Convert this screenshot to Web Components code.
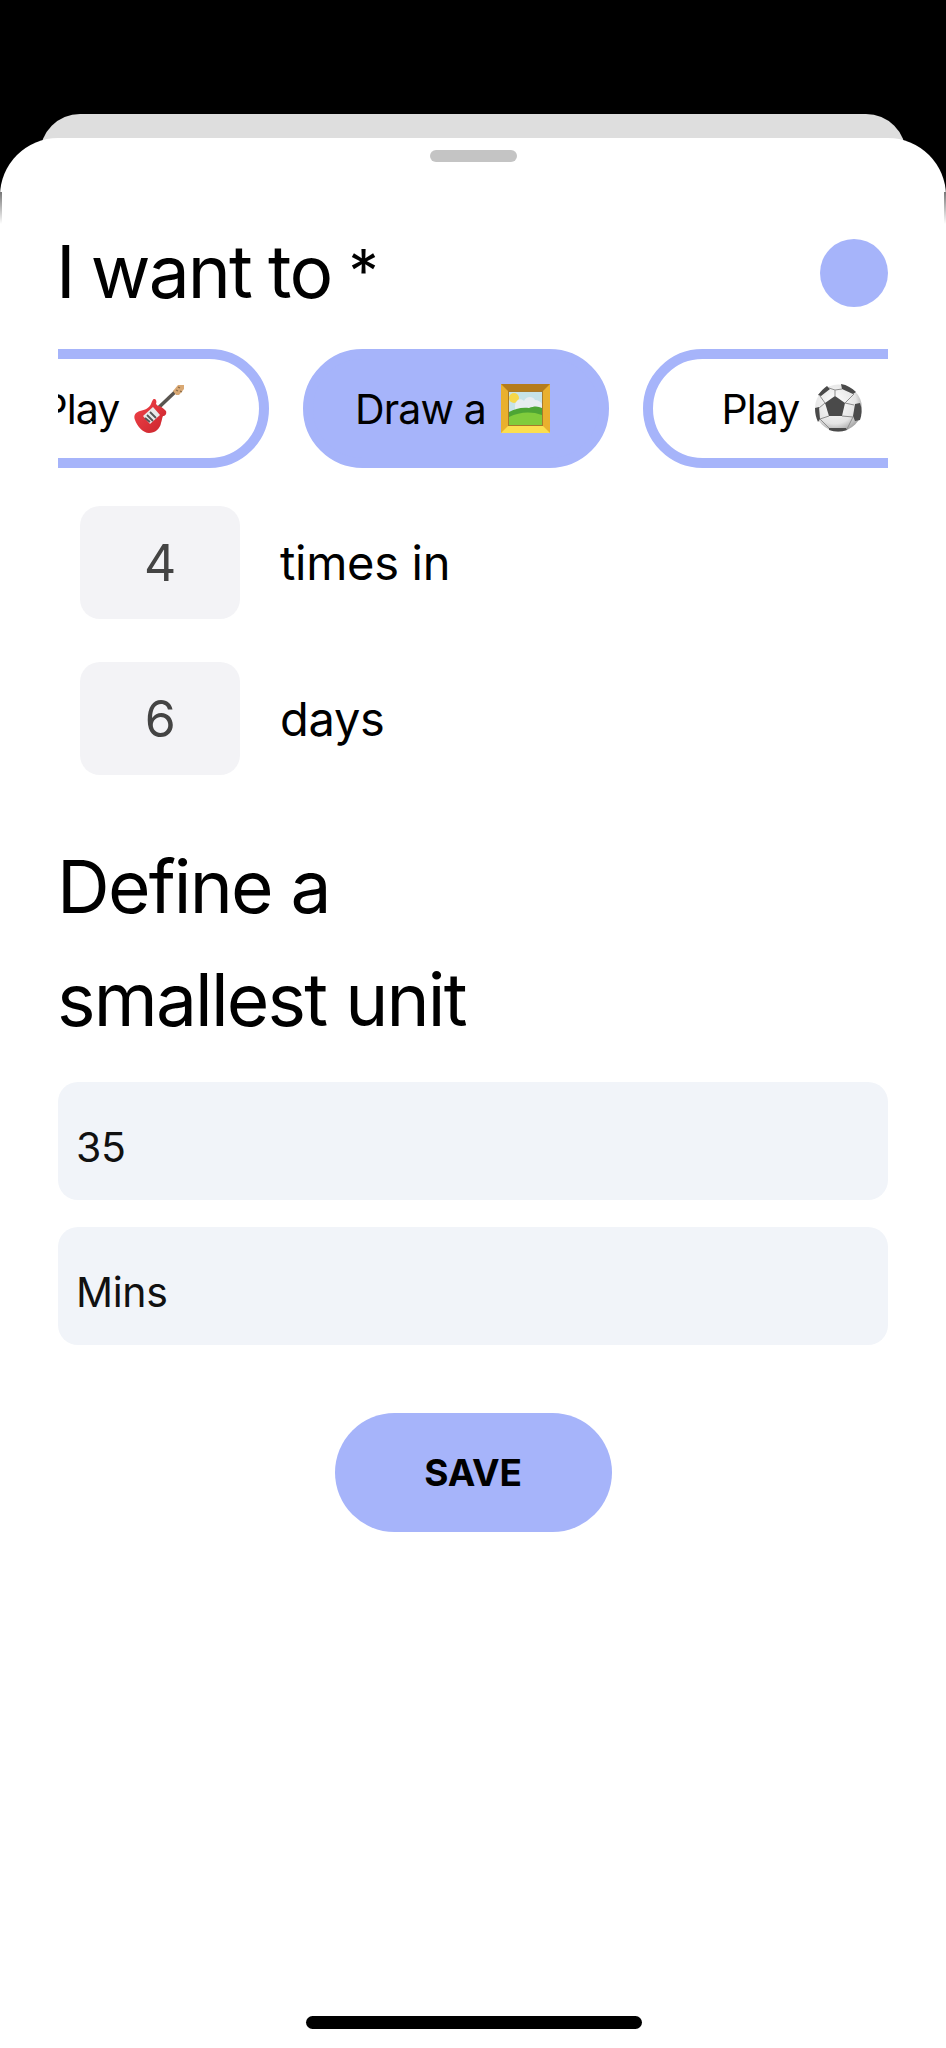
<!DOCTYPE html>
<html lang="en">
<head>
<meta charset="utf-8">
<title>I want to</title>
<style>
  html, body { margin: 0; background: #000; }
</style>
</head>
<body>
<sheet-stage>
  <section-title>I want to <span class="star">*</span><span slot="aside" class="dot"></span></section-title>
  <pill-strip>
    <habit-pill>Play <habit-emoji name="guitar"></habit-emoji></habit-pill>
    <habit-pill selected>Draw a <habit-emoji name="picture"></habit-emoji></habit-pill>
    <habit-pill>Play <habit-emoji name="ball"></habit-emoji></habit-pill>
  </pill-strip>
  <count-row value="4">times in</count-row>
  <count-row value="6">days</count-row>
  <unit-heading>Define a<br>smallest unit</unit-heading>
  <text-field value="35"></text-field>
  <text-field value="Mins"></text-field>
  <save-button>SAVE</save-button>
</sheet-stage>

<script>
const FONT = `Inter, Roboto, 'Liberation Sans', sans-serif`;

class SheetStage extends HTMLElement {
  constructor() {
    super();
    this.attachShadow({ mode: 'open' }).innerHTML = `
      <style>
        :host { display: block; width: 946px; height: 2048px; overflow: hidden; background: #000; padding-top: 114px; box-sizing: border-box; font-family: ${FONT}; }
        .back { margin: 0 40px; padding-top: 24px; background: #dedede; border-radius: 40px 40px 0 0; }
        .front { position: relative; margin: 0 -40px; height: 1910px; box-sizing: border-box; padding: 12px 58px 0; background: #fff; border-radius: 58px 58px 0 0; }
        /* the thin dark fade where the sheet's rounded corner meets the screen edge */
        .front::before, .front::after { content: ''; position: absolute; top: 54px; width: 2px; height: 32px; background: linear-gradient(#777, #fff); }
        .front::before { left: 0; }
        .front::after { right: 0; }
        .handle { width: 87px; height: 12px; margin: 0 auto 77px; background: #c4c4c4; border-radius: 6px; }
        .home { position: absolute; left: 306px; bottom: 19px; width: 336px; height: 13px; background: #000; border-radius: 7px; }
      </style>
      <div class="back">
        <div class="front">
          <div class="handle"></div>
          <slot></slot>
          <div class="home"></div>
        </div>
      </div>`;
  }
}

class SectionTitle extends HTMLElement {
  constructor() {
    super();
    this.attachShadow({ mode: 'open' }).innerHTML = `
      <style>
        :host { display: flex; align-items: center; justify-content: space-between; height: 68px; font-size: 73px; line-height: 68px; letter-spacing: -1.9px; word-spacing: -1.5px; color: #000; }
        .text { margin: 0 0 3px -2px; white-space: nowrap; }
        ::slotted(.star) { font-size: 60px; letter-spacing: 0; vertical-align: 5px; }
        ::slotted(.dot) { display: block; width: 68px; height: 68px; border-radius: 50%; background: #a6b4fa; }
      </style>
      <span class="text"><slot></slot></span>
      <slot name="aside"></slot>`;
  }
}

class PillStrip extends HTMLElement {
  constructor() {
    super();
    this.attachShadow({ mode: 'open' }).innerHTML = `
      <style>
        :host { display: block; overflow: hidden; margin-top: 42px; }
        .track { display: flex; gap: 34px; margin-left: -95px; }
      </style>
      <div class="track"><slot></slot></div>`;
  }
}

class HabitPill extends HTMLElement {
  constructor() {
    super();
    this.attachShadow({ mode: 'open' }).innerHTML = `
      <style>
        :host { flex: none; display: flex; align-items: center; justify-content: center; gap: 15px; width: 306px; height: 119px; box-sizing: border-box; padding-right: 7px; border: 10px solid #a6b4fa; border-radius: 60px; font-size: 41px; letter-spacing: -0.9px; color: #000; white-space: nowrap; }
        :host([selected]) { background: #a6b4fa; }
      </style>
      <slot></slot>`;
  }
}

const EMOJI = {
  guitar: `
    <defs><linearGradient id="g" x1="0" y1="0" x2="1" y2="1"><stop offset="0" stop-color="#f2444a"/><stop offset="1" stop-color="#c9242c"/></linearGradient></defs>
    <path d="M21 27L41 8" stroke="#5a5550" stroke-width="3.5"/>
    <path d="M39 7l5-6h6v4l-5 6h-3z" fill="#d9a873"/>
    <path d="M44 3l2 1M46 7l2 1M42 6l2 1" stroke="#8a6a48" stroke-width="1.2"/>
    <path d="M20 15c2 0 3 2 2 5l2 2c3 0 5 2 8 5 1 3-1 5-3 5-1 2-1 4-2 7-1 6-6 10-12 10S3 42 1 36c-2-5 1-8 5-9 5-1 9-3 11-7 1-3 2-5 3-5z" fill="url(#g)"/>
    <path d="M9 32l10-9 7 8-10 9z" fill="#e9e9e9"/>
    <path d="M13 31l6 6M16 28l6 6M11 34l5 4" stroke="#555" stroke-width="1.8"/>`,
  picture: `
    <rect width="49" height="49" fill="#e9b02e"/>
    <path d="M0 0h49l-7 7H7z" fill="#b57c1c"/>
    <path d="M0 49h49l-7-7H7z" fill="#fbdf50"/>
    <rect x="7" y="7" width="35" height="35" fill="#a87a2a"/>
    <rect x="8" y="8" width="33" height="33" fill="#c6e3e8"/>
    <circle cx="13" cy="14" r="5" fill="#f6d84a"/>
    <path d="M14 21c1-6 6-7 9-4 2-5 9-5 11-1 3 0 6 2 7 4v6H14z" fill="#e8edf0"/>
    <path d="M8 28c6-3 12-5 20-4 5-2 9-2 13 0v17H8z" fill="#4da534"/>
    <path d="M8 33c10-5 22-6 33-2v10H8z" fill="#80cc3c"/>`,
  ball: `
    <defs><radialGradient id="b" cx="42%" cy="38%" r="65%"><stop offset="0" stop-color="#fff"/><stop offset=".7" stop-color="#e4e4e4"/><stop offset="1" stop-color="#a0a0a0"/></radialGradient></defs>
    <circle cx="24.5" cy="24" r="23.5" fill="url(#b)"/>
    <path d="M21 12l10 7-3 13H15l-4-13z" fill="#4a4a4a"/>
    <path d="M4 11c3-4 6-7 9-9l3 3-9 7zM27 0c6 1 11 4 15 8l-3 2-11-5zM41 20l5-1c2 5 2 12 0 17l-5 1-2-5zM1 24l4-1 1 12-2 3c-2-4-3-9-3-14zM15 44h17l1 2c-6 2-12 2-18 0z" fill="#4a4a4a"/>
    <path d="M21 12V6l-6-2M21 6l7-1M31 19l9-9M31 19l9 2M11 19L6 12M11 19l-6 5M28 32l11 1M15 32L6 35M39 33l-6 12M6 35l9 9" stroke="#8d8d8d" stroke-width="1" fill="none"/>`
};

class HabitEmoji extends HTMLElement {
  constructor() {
    super();
    this.attachShadow({ mode: 'open' });
  }
  connectedCallback() {
    const art = EMOJI[this.getAttribute('name')] || '';
    this.shadowRoot.innerHTML = `
      <style>
        :host { display: inline-block; flex: none; width: 49px; height: 49px; }
        svg { display: block; width: 49px; height: 49px; overflow: visible; }
      </style>
      <svg viewBox="0 0 49 49" role="img">${art}</svg>`;
  }
}

class CountRow extends HTMLElement {
  constructor() {
    super();
    this.attachShadow({ mode: 'open' });
  }
  connectedCallback() {
    this.shadowRoot.innerHTML = `
      <style>
        :host { display: flex; align-items: center; gap: 40px; margin: 38px 0 0 22px; font-size: 47px; letter-spacing: -0.3px; color: #000; }
        :host(:last-of-type) { margin-top: 43px; }
        .box { width: 160px; height: 113px; display: flex; align-items: center; justify-content: center; background: #f3f3f6; border-radius: 20px; color: #444; font-size: 50px; }
      </style>
      <div class="box">${this.getAttribute('value')}</div>
      <span><slot></slot></span>`;
  }
}

class UnitHeading extends HTMLElement {
  constructor() {
    super();
    this.attachShadow({ mode: 'open' }).innerHTML = `
      <style>
        :host { display: block; margin: 55px 0 -1px -1px; font-size: 73px; line-height: 113px; letter-spacing: -1.8px; color: #000; }
      </style>
      <slot></slot>`;
  }
}

class TextField extends HTMLElement {
  constructor() {
    super();
    this.attachShadow({ mode: 'open' });
  }
  connectedCallback() {
    this.shadowRoot.innerHTML = `
      <style>
        :host { display: flex; align-items: center; height: 118px; margin-top: 27px; padding: 11px 18px 0; box-sizing: border-box; background: #f1f4f9; border-radius: 20px; font-size: 41px; letter-spacing: -0.3px; color: #111; }
      </style>
      ${this.getAttribute('value')}`;
  }
}

class SaveButton extends HTMLElement {
  constructor() {
    super();
    this.attachShadow({ mode: 'open' }).innerHTML = `
      <style>
        :host { display: flex; align-items: center; justify-content: center; width: 277px; height: 119px; margin: 68px auto 0; background: #a6b4fa; border-radius: 60px; font-size: 37px; font-weight: 700; letter-spacing: -0.3px; color: #000; }
      </style>
      <slot></slot>`;
  }
}

customElements.define('sheet-stage', SheetStage);
customElements.define('section-title', SectionTitle);
customElements.define('pill-strip', PillStrip);
customElements.define('habit-pill', HabitPill);
customElements.define('habit-emoji', HabitEmoji);
customElements.define('count-row', CountRow);
customElements.define('unit-heading', UnitHeading);
customElements.define('text-field', TextField);
customElements.define('save-button', SaveButton);
</script>
</body>
</html>
